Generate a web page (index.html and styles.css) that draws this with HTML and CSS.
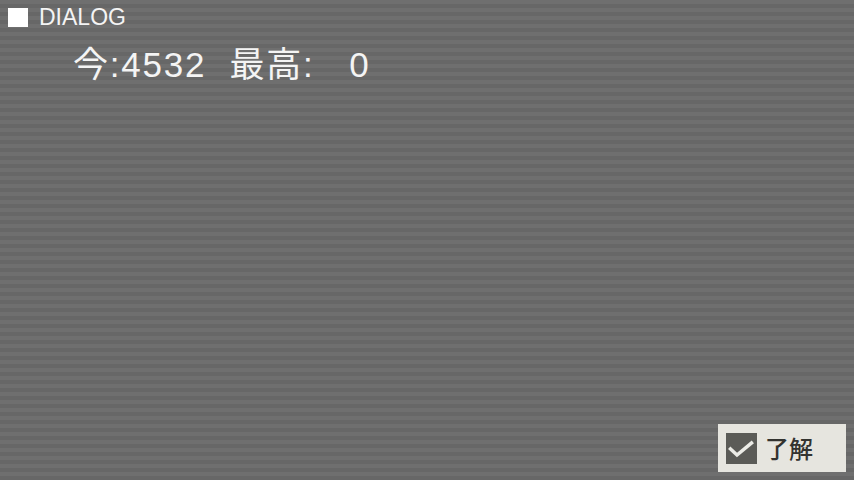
FILE: index.html
```html
<!DOCTYPE html>
<html lang="ja">
<head>
<meta charset="utf-8">
<link rel="stylesheet" href="styles.css">
</head>
<body>
<div class="screen">
  <div class="header">
    <div class="box"></div>
    <div class="title">DIALOG</div>
  </div>
  <div class="score">今:4532  最高:   0</div>
  <div class="footer">
    <div class="ok-button">
      <div class="check">
        <svg width="31" height="31" viewBox="0 0 31 31">
          <path d="M4.5 16 L11 22 L25.5 10" fill="none" stroke="#ebebe6" stroke-width="3.5" stroke-linecap="square" stroke-linejoin="miter"/>
        </svg>
      </div>
      <span class="ok-label">了解</span>
    </div>
  </div>
</div>
</body>
</html>
```
FILE: styles.css
```css
html, body {
  margin: 0;
  padding: 0;
}
body {
  width: 854px;
  height: 480px;
  overflow: hidden;
}
.screen {
  width: 854px;
  height: 480px;
  box-sizing: border-box;
  display: flex;
  flex-direction: column;
  background: repeating-linear-gradient(to bottom, #6f6f6f 0px, #6f6f6f 4px, #676767 4px, #676767 8px);
  font-family: "Liberation Sans", "Noto Sans CJK JP", sans-serif;
  color: #f4f4f4;
}
.header {
  display: flex;
  align-items: center;
  padding: 4px 0 0 8px;
  height: 26px;
  gap: 11px;
}
.box {
  width: 20px;
  height: 19px;
  background: #ffffff;
}
.title {
  font-size: 23px;
  line-height: 26px;
}
.score {
  margin: 15px 0 0 73px;
  font-size: 35px;
  line-height: 40px;
  letter-spacing: 1.8px;
  white-space: pre;
}
.footer {
  margin-top: auto;
  display: flex;
  justify-content: flex-end;
  padding: 0 8px 8px 0;
}
.ok-button {
  width: 128px;
  height: 48px;
  box-sizing: border-box;
  background: #e6e5df;
  display: flex;
  align-items: center;
  padding-left: 8px;
  gap: 8px;
}
.check {
  width: 31px;
  height: 31px;
  background: #5b5b57;
  display: flex;
}
.ok-label {
  font-family: "Noto Sans CJK JP", sans-serif;
  font-size: 24px;
  font-weight: 500;
  color: #333330;
  line-height: 30px;
}
```
